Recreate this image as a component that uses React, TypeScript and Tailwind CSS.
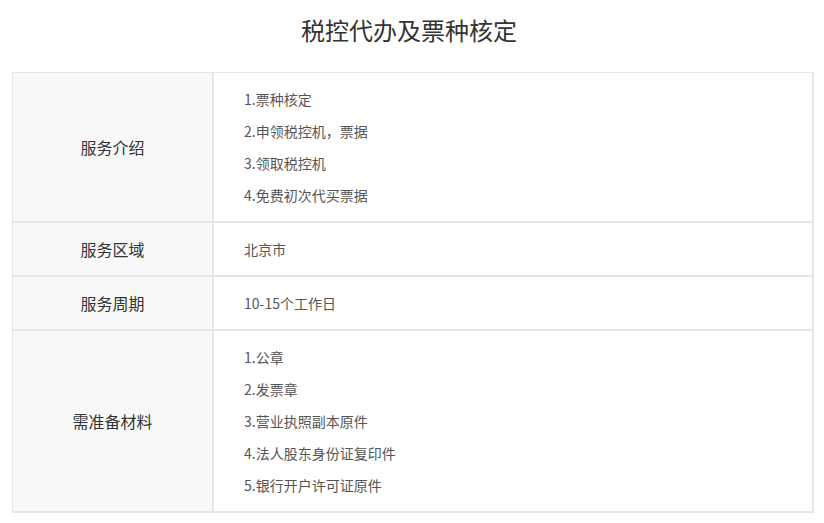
const rows = [
  { label: '服务介绍', items: ['1.票种核定', '2.申领税控机，票据', '3.领取税控机', '4.免费初次代买票据'] },
  { label: '服务区域', items: ['北京市'] },
  { label: '服务周期', items: ['10-15个工作日'] },
  { label: '需准备材料', items: ['1.公章', '2.发票章', '3.营业执照副本原件', '4.法人股东身份证复印件', '5.银行开户许可证原件'] },
];

export default function App() {
  return (
    <div
      className="w-[824px] h-[523px] bg-white overflow-hidden"
      style={{ fontFamily: '"Microsoft YaHei", "Noto Sans CJK SC", sans-serif' }}
    >
      <h1 className="h-[72px] pt-[13px] pr-[6px] text-center text-[24px] leading-[34px] text-[#333]">
        税控代办及票种核定
      </h1>
      <div className="ml-[12px] w-[802px] border-t border-l border-[#e6e6e6]">
        {rows.map(row => (
          <div key={row.label} className="flex">
            <div className="w-[201px] shrink-0 flex items-center justify-center bg-[#f8f8f8] border-r-2 border-b-2 border-[#e6e6e6] text-[16px] text-[#333]">
              {row.label}
            </div>
            <div className="flex-1 py-[10px] pl-[30px] border-r-2 border-b-2 border-[#e6e6e6] text-[14px] leading-[32px] text-[#555]">
              {row.items.map(item => (
                <div key={item}>{item}</div>
              ))}
            </div>
          </div>
        ))}
      </div>
    </div>
  );
}
